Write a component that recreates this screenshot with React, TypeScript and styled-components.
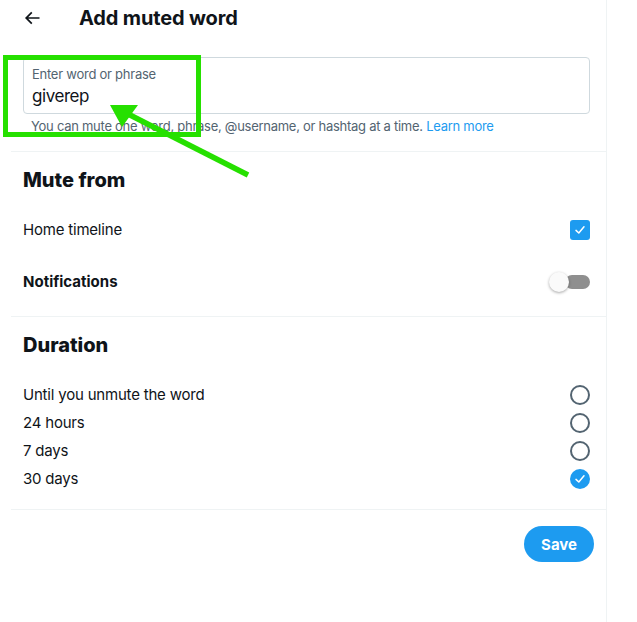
import React from "react";
import styled, { createGlobalStyle } from "styled-components";

const GlobalStyle = createGlobalStyle`
  html, body { margin: 0; padding: 0; background: #ffffff; }
  body {
    font-family: Inter, "Noto Sans", "Liberation Sans", sans-serif;
    color: #0f1419;
    -webkit-font-smoothing: antialiased;
  }
  * { box-sizing: border-box; }
`;

const Page = styled.div`
  position: relative;
  display: flex;
  padding-left: 11px;
  min-height: 622px;
  width: 637px;
`;

const Column = styled.main`
  width: 596px;
  border-right: 1px solid #eff3f4;
  display: flex;
  flex-direction: column;
`;

const Header = styled.header`
  height: 36px;
  display: flex;
  align-items: center;
  padding-left: 11px;
`;

const BackButton = styled.button`
  width: 20px;
  height: 20px;
  padding: 0;
  border: none;
  background: none;
  display: flex;
  align-items: center;
  justify-content: center;
  color: #0f1419;
  margin-right: 37px;
`;

const Title = styled.h1`
  margin: 0;
  font-size: 20px;
  line-height: 24px;
  font-weight: 700;
  letter-spacing: -0.15px;
`;

const Section = styled.section<{ $top: number; $bottom: number }>`
  padding: ${(p) => p.$top}px 16px ${(p) => p.$bottom}px 12px;
  border-bottom: 1px solid #eff3f4;
  display: flex;
  flex-direction: column;
`;

const InputBox = styled.label`
  height: 57px;
  border: 1px solid #cfd9de;
  border-radius: 4px;
  padding: 8px 8px 0 8px;
  display: flex;
  flex-direction: column;
`;

const InputLabel = styled.span`
  font-size: 13px;
  line-height: 16px;
  color: #536471;
  letter-spacing: -0.25px;
`;

const InputValue = styled.span`
  margin-top: 2px;
  font-size: 17px;
  line-height: 24px;
  color: #0f1419;
  letter-spacing: -0.45px;
`;

const Help = styled.p`
  margin: 4px 0 0 8px;
  font-size: 13px;
  line-height: 16px;
  color: #536471;
  letter-spacing: -0.27px;
`;

const Link = styled.a`
  color: #1d9bf0;
  text-decoration: none;
`;

const SectionTitle = styled.h2`
  margin: 0;
  font-size: 20px;
  line-height: 24px;
  font-weight: 800;
`;

const ToggleRow = styled.div<{ $first?: boolean }>`
  height: 52px;
  display: flex;
  align-items: center;
  justify-content: space-between;
  margin-top: ${(p) => (p.$first ? 12 : 0)}px;
`;

const RowLabel = styled.span<{ $bold?: boolean }>`
  font-size: 15px;
  line-height: 20px;
  font-weight: ${(p) => (p.$bold ? 700 : 400)};
  letter-spacing: ${(p) => (p.$bold ? 0 : -0.2)}px;
  color: #0f1419;
`;

const CheckBox = styled.span`
  width: 20px;
  height: 20px;
  border-radius: 3px;
  background: #1d9bf0;
  display: flex;
  align-items: center;
  justify-content: center;
`;

const Switch = styled.span`
  position: relative;
  width: 41px;
  height: 22px;
  display: flex;
  align-items: center;
  justify-content: flex-end;
`;

const Track = styled.span`
  width: 25px;
  height: 14px;
  border-radius: 7px;
  background: #8f8f8f;
`;

const Knob = styled.span`
  position: absolute;
  left: 0;
  top: 1px;
  width: 20px;
  height: 20px;
  border-radius: 50%;
  background: #fafafa;
  box-shadow: 0 1px 3px rgba(0, 0, 0, 0.35);
`;

const Options = styled.div`
  margin-top: 24px;
  display: flex;
  flex-direction: column;
`;

const OptionRow = styled.div`
  height: 28px;
  display: flex;
  align-items: center;
  justify-content: space-between;
`;

const Radio = styled.span<{ $checked?: boolean }>`
  width: 20px;
  height: 20px;
  border-radius: 50%;
  border: ${(p) => (p.$checked ? "none" : "2px solid #536471")};
  background: ${(p) => (p.$checked ? "#1d9bf0" : "transparent")};
  display: flex;
  align-items: center;
  justify-content: center;
`;

const Footer = styled.div`
  padding: 16px 12px 0 0;
  display: flex;
  justify-content: flex-end;
`;

const SaveButton = styled.button`
  height: 36px;
  padding: 0 17px;
  border: none;
  border-radius: 18px;
  background: #1d9bf0;
  color: #ffffff;
  font-family: inherit;
  font-size: 15px;
  font-weight: 700;
`;

const Annotation = styled.svg`
  position: absolute;
  left: 0;
  top: 0;
  pointer-events: none;
`;

const Check = () => (
  <svg width="14" height="14" viewBox="0 0 14 14">
    <polyline
      points="3,7.4 5.8,10 11,3.8"
      fill="none"
      stroke="#ffffff"
      strokeWidth="1.5"
      strokeLinecap="round"
      strokeLinejoin="round"
    />
  </svg>
);

const durations = [
  { label: "Until you unmute the word", checked: false },
  { label: "24 hours", checked: false },
  { label: "7 days", checked: false },
  { label: "30 days", checked: true },
];

export default function App() {
  return (
    <>
      <GlobalStyle />
      <Page>
        <Column>
          <Header>
            <BackButton aria-label="Back">
              <svg width="20" height="20" viewBox="0 0 24 24">
                <path
                  fill="currentColor"
                  d="M7.414 13l5.043 5.04-1.414 1.42L3.586 12l7.457-7.46 1.414 1.42L7.414 11H21v2H7.414z"
                />
              </svg>
            </BackButton>
            <Title>Add muted word</Title>
          </Header>

          <Section $top={21} $bottom={17}>
            <InputBox>
              <InputLabel>Enter word or phrase</InputLabel>
              <InputValue>giverep</InputValue>
            </InputBox>
            <Help>
              You can mute one word, phrase, @username, or hashtag at a time.{" "}
              <Link href="#">Learn more</Link>
            </Help>
          </Section>

          <Section $top={16} $bottom={8}>
            <SectionTitle>Mute from</SectionTitle>
            <ToggleRow $first>
              <RowLabel>Home timeline</RowLabel>
              <CheckBox>
                <Check />
              </CheckBox>
            </ToggleRow>
            <ToggleRow>
              <RowLabel $bold>Notifications</RowLabel>
              <Switch>
                <Track />
                <Knob />
              </Switch>
            </ToggleRow>
          </Section>

          <Section $top={16} $bottom={16}>
            <SectionTitle>Duration</SectionTitle>
            <Options>
              {durations.map((d) => (
                <OptionRow key={d.label}>
                  <RowLabel>{d.label}</RowLabel>
                  <Radio $checked={d.checked}>{d.checked && <Check />}</Radio>
                </OptionRow>
              ))}
            </Options>
          </Section>

          <Footer>
            <SaveButton>Save</SaveButton>
          </Footer>
        </Column>

        <Annotation width="637" height="622" viewBox="0 0 637 622">
          <rect
            x="5.5"
            y="57.5"
            width="193"
            height="77"
            fill="none"
            stroke="#26e000"
            strokeWidth="5"
          />
          <line
            x1="248"
            y1="175"
            x2="128"
            y2="114"
            stroke="#26e000"
            strokeWidth="5.5"
          />
          <polygon points="110,105 138,105 122,127" fill="#26e000" />
        </Annotation>
      </Page>
    </>
  );
}
